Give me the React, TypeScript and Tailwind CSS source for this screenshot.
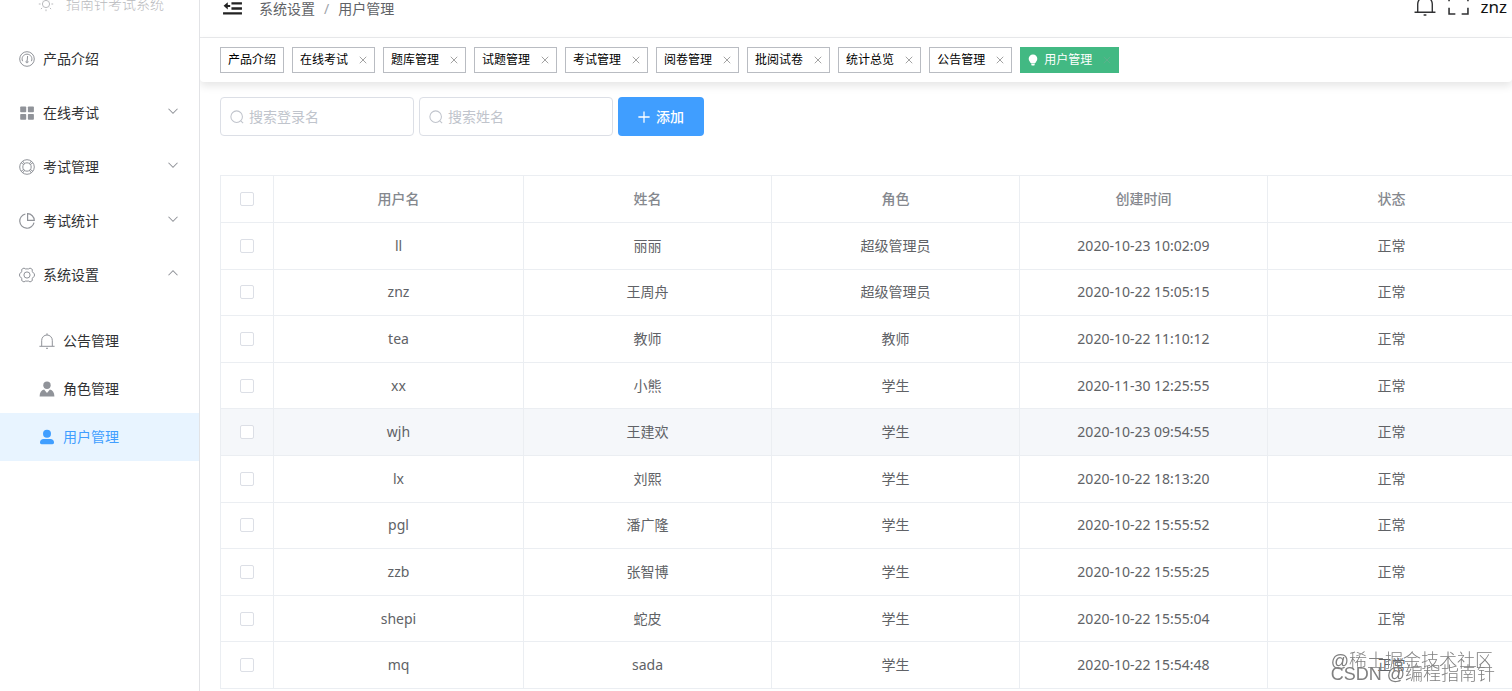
import type { ReactNode } from "react";

type IconProps = { className?: string };

function Icon({ className = "", children, width = 1 }: IconProps & { children: ReactNode; width?: number }) {
  return (
    <svg
      viewBox="0 0 16 16"
      className={`shrink-0 ${className}`}
      fill="none"
      stroke="currentColor"
      strokeWidth={width}
      aria-hidden="true"
    >
      {children}
    </svg>
  );
}

const SunIcon = ({ className }: IconProps) => (
  <Icon className={className}>
    <circle cx="8" cy="8" r="3.6" />
    <path d="M8 .8v1.8M8 13.4v1.8M.8 8h1.8M13.4 8h1.8M2.9 2.9l1.2 1.2M11.9 11.9l1.2 1.2M2.9 13.1l1.2-1.2M11.9 4.1l1.2-1.2" />
  </Icon>
);

const GaugeIcon = ({ className }: IconProps) => (
  <Icon className={className}>
    <circle cx="8" cy="8" r="7.3" />
    <path d="M3.6 10.2A4.900 4.900 0 1 1 12.400 10.200" />
    <path d="M8.6 5L8.200 9.600" />
    <circle cx="8" cy="10.800" r="1" />
  </Icon>
);

const GridIcon = ({ className }: IconProps) => (
  <Icon className={className}>
    <g fill="currentColor" stroke="none">
      <rect x="1.2" y="1.4" width="6" height="5.8" rx=".8" />
      <rect x="8.9" y="1.4" width="6" height="5.8" rx=".8" />
      <rect x="1.2" y="9" width="6" height="5.8" rx=".8" />
      <rect x="8.9" y="9" width="6" height="5.8" rx=".8" />
    </g>
  </Icon>
);

const HelpIcon = ({ className }: IconProps) => (
  <Icon className={className}>
    <circle cx="8" cy="8" r="7.3" />
    <circle cx="8" cy="8" r="4.2" />
    <path d="M3.8 2.200l1.800 2.600M2.200 3.800l2.600 1.800M12.200 2.200l-1.800 2.600M13.800 3.800l-2.600 1.800M3.800 13.800l1.800-2.600M2.200 12.200l2.600-1.800M12.200 13.800l-1.800-2.600M13.800 12.200l-2.600-1.800" />
  </Icon>
);

const PieIcon = ({ className }: IconProps) => (
  <Icon className={className} width={1.2}>
    <path d="M6.4 1A7.2 7.2 0 1 0 15 9.6" />
    <path d="M8.600 .7v6.700h6.700A6.900 6.900 0 0 0 8.600 .7z" />
  </Icon>
);

const GearIcon = ({ className }: IconProps) => (
  <Icon className={className}>
    <path
      strokeLinejoin="round"
      d="M5 1L6.200 1.900H9.800L11 1L13.300 2.400L13.200 4.300L14.300 6L15.400 6.700V9.300L14.300 10L13.200 11.700L13.300 13.600L11 15L9.800 14.100H6.200L5 15L2.700 13.600L2.800 11.700L1.700 10L.6 9.300V6.700L1.700 6L2.800 4.300L2.700 2.400Z"
    />
    <circle cx="8" cy="8" r="3.100" />
  </Icon>
);

const BellIcon = ({ className }: IconProps) => (
  <Icon className={className}>
    <path d="M2.700 13.200V7.300a5.300 5.300 0 0 1 10.600 0v5.900M.4 13.300h15.200M8 .300v1.700M7 15.300h2" />
  </Icon>
);

const RoleIcon = ({ className }: IconProps) => (
  <Icon className={className}>
    <g fill="currentColor" stroke="none">
      <circle cx="8" cy="4.200" r="3.700" />
      <path d="M.6 15.400c0-3.800 1.700-6.300 4.500-6.900L8 12l2.900-3.500c2.800.6 4.500 3.100 4.500 6.900z" />
    </g>
  </Icon>
);

const UserIcon = ({ className }: IconProps) => (
  <Icon className={className}>
    <g fill="currentColor" stroke="none">
      <circle cx="8" cy="4.700" r="4" />
      <path d="M4.500 10h7c2 0 3.500 1.500 3.500 3.500 0 1-.6 1.700-1.600 1.700H2.600c-1 0-1.600-.7-1.600-1.700C1 11.500 2.500 10 4.500 10z" />
    </g>
  </Icon>
);

const ChevronIcon = ({ className }: IconProps) => (
  <Icon className={className} width={1.4}>
    <path d="M2 5l6 6 6-6" />
  </Icon>
);

const CloseIcon = ({ className }: IconProps) => (
  <Icon className={className} width={1.8}>
    <path d="M1.500 1.500l13 13M14.500 1.500l-13 13" />
  </Icon>
);

const SearchIcon = ({ className }: IconProps) => (
  <Icon className={className} width={1.200}>
    <circle cx="7.600" cy="7.600" r="6.600" />
    <path d="M12.300 12.300l2.700 2.700" />
  </Icon>
);

const PlusIcon = ({ className }: IconProps) => (
  <Icon className={className} width={1.700}>
    <path d="M8 .5v15M.5 8h15" />
  </Icon>
);

const FoldIcon = ({ className }: IconProps) => (
  <svg viewBox="0 0 20 20" className={`shrink-0 ${className}`} fill="currentColor" aria-hidden="true">
    <path d="M1 1h18v2.200H1zM9 6h10v2.200H9zM9 10.800h10V13H9zM1 15.500h18v2.200H1zM1.500 9.400l4-3.400v2.500h2.300v2H5.500v2.400z" />
  </svg>
);

const FullscreenIcon = ({ className }: IconProps) => (
  <svg viewBox="0 0 20 20" className={`shrink-0 ${className}`} fill="none" stroke="currentColor" strokeWidth="1.500" aria-hidden="true">
    <path d="M1 7V1h6M13 1h6v6M19 13v6h-6M7 19H1v-6" />
  </svg>
);

const BulbIcon = ({ className }: IconProps) => (
  <svg viewBox="0 0 10 12" className={`shrink-0 ${className}`} fill="currentColor" aria-hidden="true">
    <path d="M5 .5a4.200 4.200 0 0 1 4.300 4.300c0 2-1.300 2.900-1.900 4.200H2.600C2 7.700.7 6.800.7 4.800A4.200 4.200 0 0 1 5 .5zM3 9.500h4L6.300 11.500H3.700z" />
  </svg>
);

const menu = [
  { label: "产品介绍", icon: GaugeIcon, state: "leaf" },
  { label: "在线考试", icon: GridIcon, state: "closed" },
  { label: "考试管理", icon: HelpIcon, state: "closed" },
  { label: "考试统计", icon: PieIcon, state: "closed" },
  { label: "系统设置", icon: GearIcon, state: "open" },
];

const submenu = [
  { label: "公告管理", icon: BellIcon, active: false },
  { label: "角色管理", icon: RoleIcon, active: false },
  { label: "用户管理", icon: UserIcon, active: true },
];

const tabs = ["在线考试", "题库管理", "试题管理", "考试管理", "阅卷管理", "批阅试卷", "统计总览", "公告管理"];

const columns = ["用户名", "姓名", "角色", "创建时间", "状态"];

const users = [
  ["ll", "丽丽", "超级管理员", "2020-10-23 10:02:09", "正常"],
  ["znz", "王周舟", "超级管理员", "2020-10-22 15:05:15", "正常"],
  ["tea", "教师", "教师", "2020-10-22 11:10:12", "正常"],
  ["xx", "小熊", "学生", "2020-11-30 12:25:55", "正常"],
  ["wjh", "王建欢", "学生", "2020-10-23 09:54:55", "正常"],
  ["lx", "刘熙", "学生", "2020-10-22 18:13:20", "正常"],
  ["pgl", "潘广隆", "学生", "2020-10-22 15:55:52", "正常"],
  ["zzb", "张智博", "学生", "2020-10-22 15:55:25", "正常"],
  ["shepi", "蛇皮", "学生", "2020-10-22 15:55:04", "正常"],
  ["mq", "sada", "学生", "2020-10-22 15:54:48", "正常"],
];

function Sidebar() {
  return (
    <aside className="z-10 w-[200px] shrink-0 border-r border-[#e2e3e6] bg-white text-sm text-[#303133]">
      <div className="-mt-6 flex h-14 items-center gap-3 pl-[38px] text-[#b9babd]">
        <SunIcon className="size-4" />
        <span className="font-light">指南针考试系统</span>
      </div>
      <nav>
        <ul>
          {menu.map(({ label, icon: ItemIcon, state }) => (
            <li key={label}>
              <a href="#" className="flex h-[54px] items-center pr-5 pl-[19px]">
                <ItemIcon className="size-4 text-[#909399]" />
                <span className="ml-2 flex-1">{label}</span>
                {state !== "leaf" && (
                  <ChevronIcon
                    className={
                      state === "open" ? "mb-1 size-3 rotate-180 text-[#909399]" : "mb-1 size-3 text-[#909399]"
                    }
                  />
                )}
              </a>
            </li>
          ))}
        </ul>
        <ul className="pt-[15px]">
          {submenu.map(({ label, icon: ItemIcon, active }) => (
            <li key={label}>
              <a
                href="#"
                className={
                  active
                    ? "flex h-12 items-center gap-2 bg-[#e8f4ff] pl-[39px] text-[#409eff]"
                    : "flex h-12 items-center gap-2 pl-[39px]"
                }
              >
                <ItemIcon className={active ? "size-4" : "size-4 text-[#909399]"} />
                {label}
              </a>
            </li>
          ))}
        </ul>
      </nav>
    </aside>
  );
}

function Header() {
  return (
    <header className="-mt-5 flex h-[58px] items-center border-b border-[#e9eaec] pr-[5px] pl-[22px] text-sm text-[#606266]">
      <button aria-label="收起菜单" className="pb-1 text-[#222]">
        <FoldIcon className="size-[21px]" />
      </button>
      <nav aria-label="面包屑" className="ml-4 flex flex-1 items-center gap-[9px]">
        <a href="#">系统设置</a>
        <span className="text-[#a0a4ab]">/</span>
        <span>用户管理</span>
      </nav>
      <div className="flex items-center gap-3 pb-1 text-[#303133]">
        <button aria-label="通知" className="pb-1">
          <BellIcon className="size-[22px]" />
        </button>
        <button aria-label="全屏" className="pb-1">
          <FullscreenIcon className="size-[21px]" />
        </button>
        <span className="text-[17px] leading-5 text-[#111]">znz</span>
      </div>
    </header>
  );
}

function TabBar() {
  return (
    <div className="flex h-11 items-center gap-2 rounded-b pl-5 text-xs text-black shadow-[0_4px_8px_rgba(0,0,0,0.1)]">
      <a href="#" className="flex h-[26px] items-center border border-[#b9bcc2] px-[7px]">
        产品介绍
      </a>
      {tabs.map((label) => (
        <div key={label} className="flex h-[26px] items-center gap-[11px] border border-[#b9bcc2] px-[7px]">
          <a href="#">{label}</a>
          <button aria-label={`关闭${label}`} className="text-[#999]">
            <CloseIcon className="size-2" />
          </button>
        </div>
      ))}
      <div className="flex h-[26px] items-center border border-[#42b983] bg-[#42b983] px-[7px] text-white">
        <BulbIcon className="mr-[6px] h-3 w-[10px]" />
        <a href="#">用户管理</a>
        <button aria-label="关闭用户管理" className="ml-[11px] text-[#5fb08c]">
          <CloseIcon className="size-2" />
        </button>
      </div>
    </div>
  );
}

function SearchBox({ label }: { label: string }) {
  return (
    <label className="flex h-[39px] w-[194px] items-center gap-[5px] rounded border border-[#dcdfe6] px-[9px] text-[#c0c4cc]">
      <SearchIcon className="size-[14px]" />
      <input
        type="text"
        aria-label={label}
        placeholder={label}
        className="min-w-0 flex-1 text-sm text-[#606266] outline-none placeholder:text-[#c0c4cc]"
      />
    </label>
  );
}

function Check({ label }: { label: string }) {
  return (
    <input
      type="checkbox"
      aria-label={label}
      className="mx-auto block size-[14px] appearance-none rounded-[2px] border border-[#dcdfe6] bg-white"
    />
  );
}

function UserTable() {
  return (
    <table className="h-[514px] w-full table-fixed border-separate border-spacing-0 border-t border-l border-[#ebeef2] text-center text-sm text-[#606266]">
      <colgroup>
        <col className="w-[53px]" />
        <col className="w-[250px]" />
        <col />
        <col />
        <col />
        <col />
      </colgroup>
      <thead>
        <tr className="h-[47px]">
          <th className="border-r border-b border-[#ebeef2] p-0">
            <Check label="全选" />
          </th>
          {columns.map((name) => (
            <th key={name} className="border-r border-b border-[#ebeef2] p-0 font-medium text-[#85888e]">
              {name}
            </th>
          ))}
        </tr>
      </thead>
      <tbody>
        {users.map((user) => (
          <tr key={user[0]} className={user[0] === "wjh" ? "bg-[#f5f7fa]" : "hover:bg-[#f5f7fa]"}>
            <td className="border-r border-b border-[#ebeef2] p-0">
              <Check label={`选择${user[0]}`} />
            </td>
            {user.map((value, index) => (
              <td key={index} className="border-r border-b border-[#ebeef2] p-0">
                {value}
              </td>
            ))}
          </tr>
        ))}
      </tbody>
    </table>
  );
}

export default function App() {
  return (
    <div
      lang="zh-CN"
      className="flex min-h-screen overflow-hidden bg-white font-['Noto_Sans','Noto_Sans_CJK_SC',sans-serif]"
    >
      <Sidebar />
      <div className="min-w-0 flex-1">
        <Header />
        <TabBar />
        <main className="pt-[15px] pl-5">
          <form className="flex gap-[5px]">
            <SearchBox label="搜索登录名" />
            <SearchBox label="搜索姓名" />
            <button
              type="button"
              className="flex h-[39px] items-center gap-[6px] rounded bg-[#409eff] px-5 text-sm font-medium text-white"
            >
              <PlusIcon className="size-3" />
              添加
            </button>
          </form>
          <div className="-mr-1 pt-[39px]">
            <UserTable />
          </div>
        </main>
      </div>
      <div className="pointer-events-none fixed right-[17px] bottom-[7px] flex flex-col font-['Liberation_Sans','Noto_Sans_CJK_SC',sans-serif] text-lg leading-5 font-light text-[#808080]">
        <span className="-mb-[7px]">@稀土掘金技术社区</span>
        <span>CSDN @编程指南针</span>
      </div>
    </div>
  );
}
